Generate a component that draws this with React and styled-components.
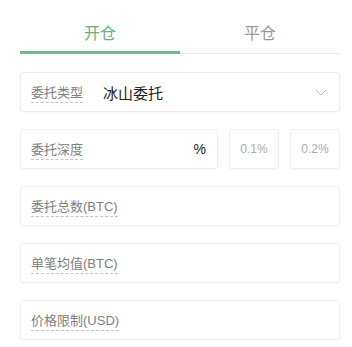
import React, { useState } from "react";
import styled, { createGlobalStyle } from "styled-components";

const GlobalStyle = createGlobalStyle`
  body {
    margin: 0;
    background: #fff;
    font-family: "Liberation Sans", "Noto Sans CJK SC", sans-serif;
  }
`;

const Container = styled.div`
  width: 320px;
  padding-left: 20px;
`;

const Tabs = styled.div`
  display: flex;
  border-bottom: 1px solid #e8edea;
`;

const Tab = styled.div`
  flex: 1;
  text-align: center;
  font-size: 16px;
  line-height: 22px;
  padding: 23px 0 6px;
  color: ${({ active }) => (active ? "#6aae82" : "#999")};
  border-bottom: 3px solid ${({ active }) => (active ? "#78b88e" : "transparent")};
  margin-bottom: -1px;
  cursor: pointer;
`;

const Form = styled.div`
  display: flex;
  flex-direction: column;
  gap: 17px;
  margin-top: 18px;
`;

const Row = styled.div`
  display: flex;
  gap: 11px;
`;

const Field = styled.div`
  flex: 1 1 auto;
  min-width: 0;
  height: 40px;
  box-sizing: border-box;
  display: flex;
  align-items: center;
  padding: 0 10px;
  border: 1px solid #eeeeee;
  border-radius: 3px;
  box-shadow: 0 1px 2px rgba(0, 0, 0, 0.03);
`;

const Label = styled.span`
  font-size: 13px;
  line-height: 18px;
  color: #808080;
  padding-top: 2px;
  border-bottom: 1px dashed #c4c4c4;
  white-space: nowrap;
`;

const Value = styled.span`
  flex: 1;
  margin-left: 20px;
  font-size: 15px;
  color: #222;
`;

const Unit = styled.span`
  margin-left: auto;
  margin-right: 1px;
  font-size: 14px;
  color: #222;
`;

const Chip = styled.div`
  flex: 0 0 50px;
  height: 40px;
  box-sizing: border-box;
  display: flex;
  align-items: center;
  justify-content: center;
  border: 1px solid #eeeeee;
  border-radius: 3px;
  box-shadow: 0 1px 2px rgba(0, 0, 0, 0.03);
  font-size: 12px;
  color: #aaa;
`;

const Chevron = () => (
  <svg width="12" height="7" viewBox="0 0 12 7" style={{ marginRight: 2 }}>
    <path d="M1 1l5 5 5-5" fill="none" stroke="#bbb" strokeWidth="1" />
  </svg>
);

const App = () => {
  const [tab, setTab] = useState(0);
  return (
    <Container>
      <GlobalStyle />
      <Tabs>
        <Tab active={tab === 0} onClick={() => setTab(0)}>开仓</Tab>
        <Tab active={tab === 1} onClick={() => setTab(1)}>平仓</Tab>
      </Tabs>
      <Form>
        <Field>
          <Label>委托类型</Label>
          <Value>冰山委托</Value>
          <Chevron />
        </Field>
        <Row>
          <Field>
            <Label>委托深度</Label>
            <Unit>%</Unit>
          </Field>
          <Chip>0.1%</Chip>
          <Chip>0.2%</Chip>
        </Row>
        <Field>
          <Label>委托总数(BTC)</Label>
        </Field>
        <Field>
          <Label>单笔均值(BTC)</Label>
        </Field>
        <Field>
          <Label>价格限制(USD)</Label>
        </Field>
      </Form>
    </Container>
  );
};

export default App;
